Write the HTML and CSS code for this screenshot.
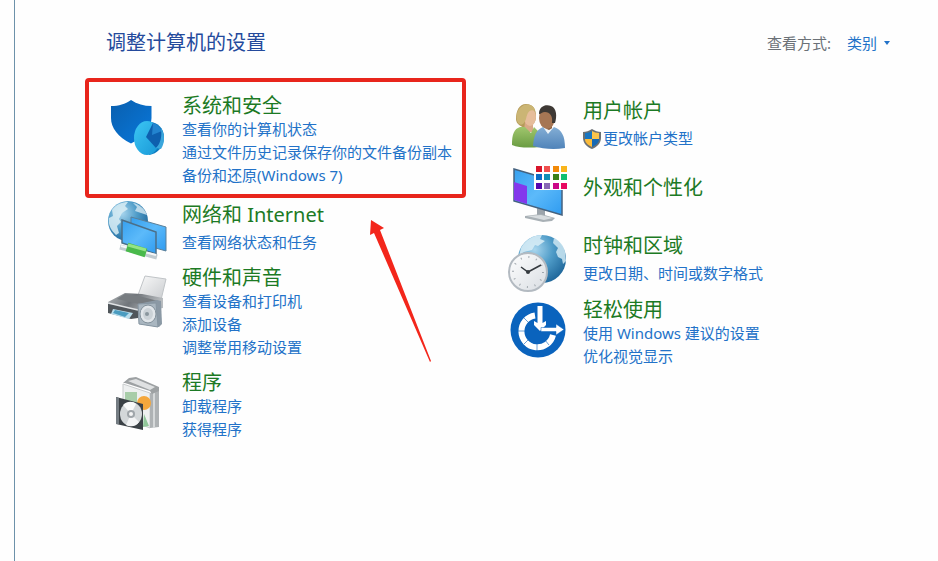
FILE: index.html
```html
<!DOCTYPE html>
<html lang="zh-CN">
<head>
    <meta charset="UTF-8">
    <meta name="viewport" content="width=device-width, initial-scale=1.0">
    <title>控制面板</title>
    <link rel="stylesheet" href="styles.css">
</head>
<body>

    <main class="panel">
        <header class="panel-header">
            <h1>调整计算机的设置</h1>
            <div class="view-by">
                <label for="view">查看方式:</label>
                <select id="view" name="view">
                    <option selected>类别</option>
                </select>
            </div>
        </header>

        <div class="columns">
            <!-- Left column -->
            <div class="column column-left">
                <div class="highlight">
                    <section class="category">
                        <svg class="icon" viewBox="0 0 58 58" aria-hidden="true">
                            <defs>
                                <linearGradient id="shieldBlue" x1="0" y1="0" x2="1" y2="1">
                                    <stop offset="0" stop-color="#0a5fae"/>
                                    <stop offset="1" stop-color="#0878dc"/>
                                </linearGradient>
                                <linearGradient id="pieBlue" x1="0" y1="0" x2="1" y2="1">
                                    <stop offset="0" stop-color="#3cc6f4"/>
                                    <stop offset="1" stop-color="#1897d6"/>
                                </linearGradient>
                            </defs>
                            <path d="M3 12C11 12 17 10 23 6C29 10 36 12 43.500 12V24C43.500 36 34 44 23 49.500C10 43 3 34 3 24Z" fill="url(#shieldBlue)"/>
                            <path d="M40 28C49 27 56 34 56 43C56 53 49 60 41 61Z" fill="#0c7abf"/>
                            <ellipse cx="39" cy="44" rx="13" ry="17" fill="url(#pieBlue)"/>
                            <path d="M45 29L38 43L48 54C57 48 57 34 45 29Z" fill="#0e5fae"/>
                            <path d="M45 29L44 41L54 37C52 33 49 30 45 29Z" fill="#2384cf"/>
                            <path d="M48 54L53 55C57 49 57 40 53 34C54 42 53 49 48 54Z" fill="#3aa6dc"/>
                        </svg>
                        <div class="details">
                            <h2><a href="#">系统和安全</a></h2>
                            <ul>
                                <li><a href="#">查看你的计算机状态</a></li>
                                <li><a href="#">通过文件历史记录保存你的文件备份副本</a></li>
                                <li><a href="#">备份和还原(Windows 7)</a></li>
                            </ul>
                        </div>
                    </section>
                    <svg class="pointer" viewBox="0 0 63 144" aria-hidden="true">
                        <path d="M2 1L15 9L11 11L62 142L61 143L5 14L1 16Z" fill="#f3261b"/>
                    </svg>
                </div>

                <section class="category spaced">
                    <svg class="icon" viewBox="0 0 58 58" aria-hidden="true">
                        <defs>
                            <radialGradient id="globe" cx="0.35" cy="0.3" r="0.75">
                                <stop offset="0" stop-color="#a9d6ee"/>
                                <stop offset="0.5" stop-color="#4f9cc8"/>
                                <stop offset="1" stop-color="#1f679b"/>
                            </radialGradient>
                            <linearGradient id="screen" x1="0" y1="0" x2="1" y2="1">
                                <stop offset="0" stop-color="#36a0ef"/>
                                <stop offset="0.5" stop-color="#5cbafa"/>
                                <stop offset="1" stop-color="#2f9bf0"/>
                            </linearGradient>
                        </defs>
                        <circle cx="20" cy="18" r="20" fill="url(#globe)"/>
                        <path d="M4 7C8 1 15-1 20-1L17 3L20 6L14 10L11 16L13 19L9 23L11 30L8 32C3 27 0 22 1 15L5 13Z" fill="#d9edf5" opacity="0.85"/>
                        <path d="M25 0C31 1 37 6 39 12L33 10L27 8L29 4Z" fill="#d4e9f2" opacity="0.8"/>
                        <path d="M23 14L58 24V48L23 38Z" fill="url(#screen)" stroke="#5b7f98"/>
                        <path d="M14 17L48 29V51L14 40Z" fill="url(#screen)" stroke="#4c6f88" stroke-width="1.500"/>
                        <path d="M12 44L49 54" stroke="#c1cbd0" stroke-width="5"/>
                        <path d="M13 43L48 52" stroke="#f5f7f8" stroke-width="2"/>
                        <path d="M19 44L38 50" stroke="#49b94b" stroke-width="9"/>
                        <path d="M20 42L38 47" stroke="#94e486" stroke-width="3"/>
                    </svg>
                    <div class="details">
                        <h2><a href="#">网络和 Internet</a></h2>
                        <ul>
                            <li><a href="#">查看网络状态和任务</a></li>
                        </ul>
                    </div>
                </section>

                <section class="category">
                    <svg class="icon" viewBox="0 0 58 58" aria-hidden="true">
                        <defs>
                            <linearGradient id="printerTop" x1="0" y1="0" x2="1" y2="0.3">
                                <stop offset="0" stop-color="#aeb2b5"/>
                                <stop offset="0.5" stop-color="#70757a"/>
                                <stop offset="1" stop-color="#b9bdc0"/>
                            </linearGradient>
                            <linearGradient id="sheet" x1="0" y1="0" x2="1" y2="1">
                                <stop offset="0" stop-color="#fafafa"/>
                                <stop offset="1" stop-color="#c8cbce"/>
                            </linearGradient>
                        </defs>
                        <path d="M37 10L58 13L53 34L30 29Z" fill="url(#sheet)" stroke="#c0c4c7"/>
                        <path d="M0 36L17 27L34 28L55 32V42L30 46L0 39Z" fill="url(#printerTop)"/>
                        <path d="M17 28L31 30L50 35L31 38L9 33Z" fill="#777c80"/>
                        <path d="M0 37L30 44V52L23 53L0 47Z" fill="#50565b"/>
                        <path d="M0 37L30 44" stroke="#e0e3e5" stroke-width="1.500"/>
                        <path d="M5 43L25 47L21 53L3 48Z" fill="#b9ddec"/>
                        <path d="M7 44L21 47L17 51L5 47Z" fill="#4b9cc0"/>
                        <path d="M30 38L49 34L53 35L54 58L51 61L31 58Z" fill="#8b99a5"/>
                        <path d="M30 38L48 37L50 61L31 58Z" fill="#a9b6c0" stroke="#8796a2"/>
                        <ellipse cx="40" cy="48" rx="8" ry="9" fill="#e1e6ea" stroke="#82909a"/>
                        <ellipse cx="40" cy="48" rx="5" ry="6" fill="#cbd2d7"/>
                        <circle cx="39" cy="48" r="2" fill="#8a969e"/>
                    </svg>
                    <div class="details">
                        <h2><a href="#">硬件和声音</a></h2>
                        <ul>
                            <li><a href="#">查看设备和打印机</a></li>
                            <li><a href="#">添加设备</a></li>
                            <li><a href="#">调整常用移动设置</a></li>
                        </ul>
                    </div>
                </section>

                <section class="category">
                    <svg class="icon" viewBox="0 0 58 58" aria-hidden="true">
                        <path d="M15 13L42 22V57L15 47Z" fill="#eef0f0" stroke="#c9cccd"/>
                        <path d="M42 22L51 18V56L42 57Z" fill="#aeb2b4"/>
                        <path d="M46 20V57" stroke="#d5d8d9" stroke-width="2"/>
                        <path d="M15 12L21 7L28 6L51 16V20L44 23L42 20L17 12Z" fill="#9da1a3"/>
                        <path d="M20 10L28 8L47 16L42 19Z" fill="#dfe1e2"/>
                        <path d="M17 21L29 21L29 32L17 29Z" fill="#a8cda9"/>
                        <path d="M36 43L41 55L35 56Z" fill="#91c79a"/>
                        <circle cx="36" cy="32" r="7" fill="#f4a73c"/>
                        <path d="M8 26L35 33V59L8 53Z" fill="#3b4146"/>
                        <path d="M8 26L11 27V53L8 53Z" fill="#747c82"/>
                        <ellipse cx="23" cy="43" rx="11" ry="12" fill="#d3d7d9"/>
                        <path d="M23 43L15 34C19 30 25 30 28 33Z" fill="#f9fafa"/>
                        <path d="M23 43L31 51C28 56 22 56 18 54Z" fill="#f3f4f5"/>
                        <ellipse cx="23" cy="43" rx="4" ry="4" fill="#9fa5a9"/>
                        <circle cx="23" cy="43" r="2" fill="#f5f5f5"/>
                    </svg>
                    <div class="details">
                        <h2><a href="#">程序</a></h2>
                        <ul>
                            <li><a href="#">卸载程序</a></li>
                            <li><a href="#">获得程序</a></li>
                        </ul>
                    </div>
                </section>
            </div>

            <!-- Right column -->
            <div class="column column-right">
                <section class="category spaced">
                    <svg class="icon" viewBox="0 0 58 58" aria-hidden="true">
                        <defs>
                            <linearGradient id="greenTop" x1="0" y1="0" x2="0" y2="1">
                                <stop offset="0" stop-color="#a0c66d"/>
                                <stop offset="1" stop-color="#6a9c42"/>
                            </linearGradient>
                            <linearGradient id="blueTop" x1="0" y1="0" x2="0" y2="1">
                                <stop offset="0" stop-color="#84aed5"/>
                                <stop offset="1" stop-color="#4f83b9"/>
                            </linearGradient>
                        </defs>
                        <path d="M17 5C24 5 27 10 27 17C27 24 23 28 17 29C12 28 7 25 7 20C7 12 10 5 17 5Z" fill="#b59b59"/>
                        <path d="M16 22H24V33H15Z" fill="#d9a987"/>
                        <ellipse cx="21" cy="18" rx="6" ry="9" fill="#e6bd9b"/>
                        <path d="M12 8C17 3 26 6 26 12C20 9 18 15 17 20C15 26 12 27 9 24C6 18 8 11 12 8Z" fill="#cbb574"/>
                        <path d="M3 46C3 35 5 30 11 28L16 28L22 34L25 28L31 34V48C20 49 10 49 3 46Z" fill="url(#greenTop)"/>
                        <path d="M34 25H43V34H34Z" fill="#8c5e3f"/>
                        <ellipse cx="38" cy="19" rx="8" ry="11" fill="#a67654"/>
                        <path d="M30 15C30 7 37 5 42 7C48 9 48 18 46 24L43 24C44 17 41 13 36 13C33 13 32 15 30 15Z" fill="#3e3935"/>
                        <path d="M33 28L40 37L45 28L40 31Z" fill="#edf3f8"/>
                        <path d="M24 47C25 36 27 31 34 28L39 35L45 28C53 31 56 37 56 49C45 51 34 50 24 47Z" fill="url(#blueTop)"/>
                    </svg>
                    <div class="details">
                        <h2><a href="#">用户帐户</a></h2>
                        <ul>
                            <li class="with-shield">
                                <svg class="shield" viewBox="0 0 18 20" aria-hidden="true">
                                    <path d="M9 0C12 2 15 3 18 3V9C18 14 14 18 9 20C4 18 0 14 0 9V3C3 3 6 2 9 0Z" fill="#6c7174"/>
                                    <path d="M9 2V10H2V4C5 4 7 3 9 2Z" fill="#1876c1"/>
                                    <path d="M9 2C11 3 13 4 16 4V10H9Z" fill="#fbc54b"/>
                                    <path d="M2 10H9V18C5 16 2 14 2 10Z" fill="#fbbb3a"/>
                                    <path d="M9 10H16C16 14 13 16 9 18Z" fill="#1769b3"/>
                                </svg>
                                <a href="#">更改帐户类型</a>
                            </li>
                        </ul>
                    </div>
                </section>

                <section class="category title-only">
                    <svg class="icon" viewBox="0 0 58 58" aria-hidden="true">
                        <path d="M28 45L36 47V54H28Z" fill="#9ca4ab"/>
                        <path d="M16 53L32 51L46 55L43 58L34 59L16 55Z" fill="#a8b0b5"/>
                        <path d="M18 53L32 52L44 55L35 57Z" fill="#d7dcdf"/>
                        <path d="M5 6L53 20V52L5 38Z" fill="url(#screen)" stroke="#45627f" stroke-width="1.500"/>
                        <path d="M5 19L18 23V41L5 37Z" fill="#8338ec"/>
                        <rect x="25" y="1" width="35" height="26" fill="#fff"/>
                        <rect x="27" y="3" width="6" height="6" fill="#d8152a"/>
                        <rect x="35" y="3" width="6" height="6" fill="#f0514f"/>
                        <rect x="44" y="3" width="6" height="6" fill="#f28a08"/>
                        <rect x="52" y="3" width="6" height="6" fill="#f9b51c"/>
                        <rect x="27" y="11" width="6" height="6" fill="#0c6cc6"/>
                        <rect x="35" y="11" width="6" height="6" fill="#118fb5"/>
                        <rect x="44" y="11" width="6" height="6" fill="#3b8119"/>
                        <rect x="52" y="11" width="6" height="6" fill="#10bf70"/>
                        <rect x="27" y="20" width="6" height="6" fill="#5607ae"/>
                        <rect x="35" y="20" width="6" height="6" fill="#8968b5"/>
                        <rect x="44" y="20" width="6" height="6" fill="#cc0788"/>
                        <rect x="52" y="20" width="6" height="6" fill="#e80a61"/>
                    </svg>
                    <div class="details">
                        <h2><a href="#">外观和个性化</a></h2>
                    </div>
                </section>

                <section class="category spaced">
                    <svg class="icon" viewBox="0 0 58 58" aria-hidden="true">
                        <defs>
                            <linearGradient id="clockFace" x1="0" y1="0" x2="1" y2="1">
                                <stop offset="0" stop-color="#ffffff"/>
                                <stop offset="1" stop-color="#d9dde2"/>
                            </linearGradient>
                        </defs>
                        <circle cx="33" cy="25" r="24" fill="url(#globe)"/>
                        <path d="M12 14C17 5 25 1 33 1L31 5L36 7L29 12L26 11L23 16L15 18L10 22Z" fill="#d5ebf5" opacity="0.9"/>
                        <path d="M45 4C51 7 55 12 56 18L57 27L54 30L53 25L49 23L47 18L49 14L44 9Z" fill="#c5e2ef" opacity="0.9"/>
                        <circle cx="19" cy="38" r="19" fill="url(#clockFace)" stroke="#b3bac1" stroke-width="2"/>
                        <circle cx="19" cy="38" r="15" fill="none" stroke="#a0a7ad" stroke-width="2" stroke-dasharray="1 6.850"/>
                        <path d="M12 33L19 38L32 31" fill="none" stroke="#353a3f" stroke-width="1.500"/>
                        <circle cx="19" cy="38" r="2" fill="#353a3f"/>
                    </svg>
                    <div class="details">
                        <h2><a href="#">时钟和区域</a></h2>
                        <ul>
                            <li><a href="#">更改日期、时间或数字格式</a></li>
                        </ul>
                    </div>
                </section>

                <section class="category">
                    <svg class="icon" viewBox="0 0 58 58" aria-hidden="true">
                        <circle cx="29" cy="32" r="27.500" fill="#0a63bd"/>
                        <path d="M26 17.500A16 16 0 1 0 44 37" fill="none" stroke="#fff" stroke-width="6"/>
                        <path d="M15 20L20 25M8 33H16M15 46L20 41M28 53V45M40 47L36 42" stroke="#0a63bd" opacity="0.6"/>
                        <path d="M28.500 8H33.500V25L37 23V27L31 33L25 27V23L28.500 25Z" fill="#fff"/>
                        <path d="M32 29.500H47V26L55 31.500L47 37V33.500H32Z" fill="#fff" stroke="#0a63bd" stroke-width="0.500"/>
                    </svg>
                    <div class="details">
                        <h2><a href="#">轻松使用</a></h2>
                        <ul>
                            <li><a href="#">使用 Windows 建议的设置</a></li>
                            <li><a href="#">优化视觉显示</a></li>
                        </ul>
                    </div>
                </section>
            </div>
        </div>
    </main>

</body>
</html>
```

FILE: styles.css
```css
* {
    margin: 0;
    padding: 0;
    box-sizing: border-box;
}

body {
    background: #fefefe;
    font-family: "Noto Sans", "Noto Sans CJK SC", sans-serif;
    font-size: 15px;
    line-height: 23px;
    color: #6b7177;
}

a {
    color: #2272c8;
    text-decoration: none;
}

a:hover {
    text-decoration: underline;
}

ul {
    list-style: none;
}

.panel {
    min-height: 100vh;
    margin-left: 14px;
    padding: 31px 48px 0 70px;
    border-left: 1px solid #6d92aa;
}

.panel-header {
    display: flex;
    justify-content: space-between;
    align-items: center;
    padding-left: 21px;
    margin-bottom: 23px;
}

.panel-header h1 {
    font-size: 20px;
    line-height: 24px;
    font-weight: normal;
    color: #244a9c;
}

/* View selector */
.view-by {
    display: flex;
    gap: 16px;
}

.view-by select {
    width: 43px;
    border: none;
    appearance: none;
    font: inherit;
    color: #2272c8;
    background: url("data:image/svg+xml,%3Csvg xmlns='http://www.w3.org/2000/svg' width='6' height='4'%3E%3Cpath d='M0 0H6L3 4Z' fill='%232272c8'/%3E%3C/svg%3E") no-repeat right center;
}

.columns {
    display: grid;
    grid-template-columns: 1fr 1fr;
    gap: 43px;
}

.column {
    display: flex;
    flex-direction: column;
    gap: 5px;
}

.column-left > .category {
    padding-left: 23px;
}

.column-left > .category + .category + .category {
    margin-top: 7px;
}

.column-right {
    padding-top: 21px;
    gap: 6px;
}

.highlight {
    position: relative;
    padding: 12px 0 7px 19px;
    border: 4px solid #e8251c;
    border-radius: 4px;
}

/* Red arrow drawn over the list, pointing at the box */
.pointer {
    position: absolute;
    left: 280px;
    top: 137px;
    width: 63px;
    height: 144px;
}

.category {
    display: flex;
    align-items: flex-start;
    gap: 16px;
}

.icon {
    flex: none;
    width: 58px;
    height: 58px;
    overflow: visible;
}

.details h2 {
    font-size: 20px;
    line-height: 24px;
    font-weight: normal;
}

.details h2 a {
    color: #1c7a24;
}

.spaced ul {
    margin-top: 4px;
}

.title-only {
    margin-bottom: 7px;
}

.title-only .details {
    padding-top: 13px;
}

.with-shield {
    display: flex;
    align-items: center;
    gap: 2px;
}

.shield {
    width: 18px;
    height: 20px;
}
```
